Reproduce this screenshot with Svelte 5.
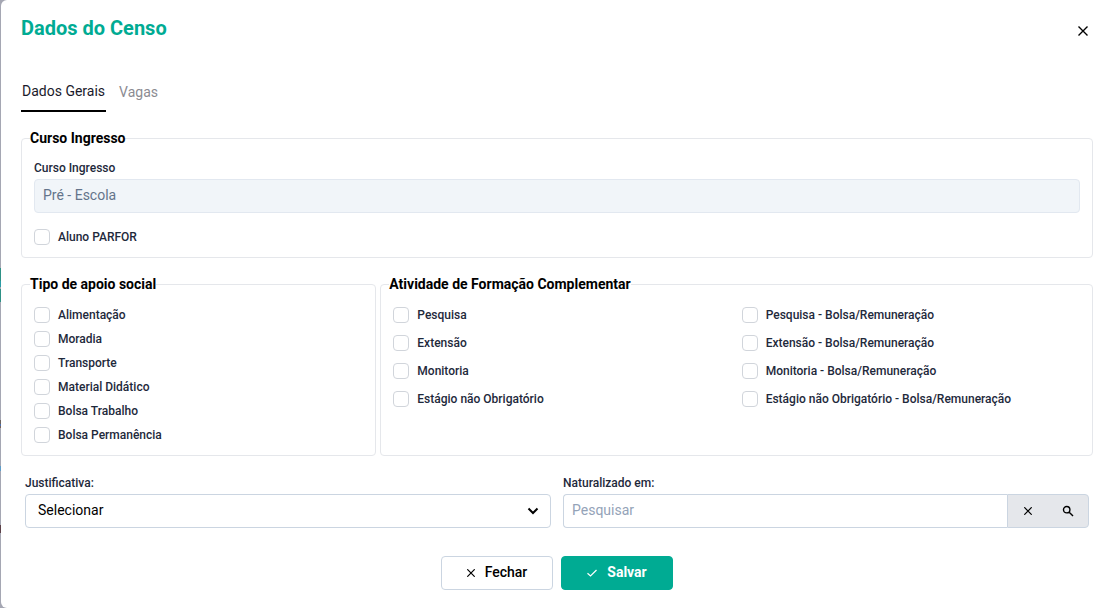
<script lang="ts">
	const supports = [
		'Alimentação',
		'Moradia',
		'Transporte',
		'Material Didático',
		'Bolsa Trabalho',
		'Bolsa Permanência'
	];
	const activities = ['Pesquisa', 'Extensão', 'Monitoria', 'Estágio não Obrigatório'];

	let tab = 'Dados Gerais';
	let parfor = false;
	let support: string[] = [];
	let activity: string[] = [];
	let search = '';
</script>

<div class="backdrop">
	<div class="dialog" role="dialog" aria-labelledby="dialog-title">
		<header>
			<h1 id="dialog-title">Dados do Censo</h1>
			<button class="close" type="button" aria-label="Fechar janela">
				<svg width="10" height="10" viewBox="0 0 10 10"><path d="M0.5 0.5L9.5 9.5M9.5 0.5L0.5 9.5" /></svg>
			</button>
		</header>

		<div class="tabs" role="tablist">
			{#each ['Dados Gerais', 'Vagas'] as name}
				<button
					type="button"
					role="tab"
					class="tab"
					class:tab--active={tab === name}
					aria-selected={tab === name}
					on:click={() => (tab = name)}>{name}</button>
			{/each}
		</div>

		<form on:submit|preventDefault>
			<fieldset>
				<legend>Curso Ingresso</legend>
				<div class="field">
					<label for="course">Curso Ingresso</label>
					<input id="course" class="control" type="text" value="Pré - Escola" disabled />
				</div>
				<label class="check check--parfor">
					<input type="checkbox" bind:checked={parfor} />
					Aluno PARFOR
				</label>
			</fieldset>

			<div class="groups">
				<fieldset class="support">
					<legend>Tipo de apoio social</legend>
					<div class="check-list">
						{#each supports as item}
							<label class="check">
								<input type="checkbox" value={item} bind:group={support} />
								{item}
							</label>
						{/each}
					</div>
				</fieldset>

				<fieldset class="activity">
					<legend>Atividade de Formação Complementar</legend>
					<div class="check-grid">
						{#each activities as item}
							<label class="check">
								<input type="checkbox" value={item} bind:group={activity} />
								{item}
							</label>
							<label class="check">
								<input type="checkbox" value="{item} - Bolsa" bind:group={activity} />
								{item} - Bolsa/Remuneração
							</label>
						{/each}
					</div>
				</fieldset>
			</div>

			<div class="row">
				<div class="field">
					<label for="reason">Justificativa:</label>
					<div class="select">
						<select id="reason" class="control">
							<option>Selecionar</option>
						</select>
						<svg class="chevron" width="12" height="8" viewBox="0 0 12 8"><path d="M1.5 1.5L6 6L10.5 1.5" /></svg>
					</div>
				</div>
				<div class="field">
					<label for="country">Naturalizado em:</label>
					<div class="search">
						<input id="country" class="control" type="text" placeholder="Pesquisar" bind:value={search} />
						<div class="search-actions">
							<button type="button" aria-label="Limpar" on:click={() => (search = '')}>
								<svg width="8" height="8" viewBox="0 0 8 8"><path d="M0.3 0.3L7.7 7.7M7.7 0.3L0.3 7.7" /></svg>
							</button>
							<button type="button" aria-label="Pesquisar">
								<svg class="lens" width="12" height="12" viewBox="0 0 12 12"><circle cx="4.7" cy="4.7" r="3.2" /><path d="M7.2 7.2L11 11" /></svg>
							</button>
						</div>
					</div>
				</div>
			</div>

			<footer>
				<button class="btn" type="button">
					<svg width="8" height="8" viewBox="0 0 8 8"><path d="M0.3 0.3L7.7 7.7M7.7 0.3L0.3 7.7" /></svg>
					Fechar
				</button>
				<button class="btn btn--primary" type="submit">
					<svg width="10" height="8" viewBox="0 0 10 8"><path d="M0.5 4.2L3.5 7L9.5 1" /></svg>
					Salvar
				</button>
			</footer>
		</form>
	</div>
</div>

<style>
:global(body) {
	background: #a5a7b3;
}
.backdrop {
	padding-left: 1px;
	/* the dimmed page behind shows along the edge */
	background: linear-gradient(
		#a5a7b3 268px,
		#2e9186 268px 281px,
		#2b9ca6 281px 287px,
		#a5a7b3 287px 289px,
		#2e9186 289px 302px,
		#a5a7b3 302px 420px,
		#6b625f 420px 424px,
		#4c6fae 424px 426px,
		#75625a 426px 428px,
		#a5a7b3 428px 466px,
		#5d9cc8 466px 471px,
		#a5a7b3 471px 525px,
		#5c4148 525px 533px,
		#a5a7b3 533px
	);
	font-family: Roboto, "Liberation Sans", sans-serif;
	font-size: 14px;
	line-height: 20px;
	color: #000;
}
.dialog {
	box-sizing: border-box;
	min-height: 100vh;
	padding: 16px 15px 18px 20px;
	border-radius: 6px 0 0 6px;
	background: #fff;
}
button,
input,
select {
	font: inherit;
	color: inherit;
	box-sizing: border-box;
	margin: 0;
}
button {
	padding: 0;
	border: 0;
	background: none;
	cursor: pointer;
}
svg {
	fill: none;
	stroke: currentColor;
	stroke-width: 1.2;
}
header {
	display: flex;
	justify-content: space-between;
	align-items: flex-start;
}
h1 {
	margin: 0;
	font-size: 20px;
	line-height: 24px;
	font-weight: 700;
	color: #00ab93;
}
.close {
	display: flex;
	align-items: center;
	justify-content: center;
	width: 20px;
	height: 30px;
}
.close svg,
.lens {
	stroke-width: 1.4;
}
.tabs {
	display: flex;
	gap: 12px;
	margin-top: 34px;
}
.tab {
	height: 32px;
	padding: 2px 1px 10px;
	color: #8b8b92;
}
.tab--active {
	padding: 1px 1px 9px;
	border-bottom: 2px solid #000;
	color: #1a1a2b;
}
fieldset {
	box-sizing: border-box;
	min-width: 0;
	margin: 0;
	padding: 12px;
	border: 1px solid #e5e7eb;
	border-radius: 4px;
}
form {
	margin-top: 16px;
}
legend {
	margin-left: -4px;
	padding: 0;
	font-weight: 700;
}
.field {
	display: flex;
	flex-direction: column;
	gap: 3px;
	flex: 1;
	min-width: 0;
}
label {
	font-size: 12px;
	line-height: 16px;
	font-weight: 500;
	color: #1e293b;
}
.control {
	width: 100%;
	height: 34px;
	padding: 0 8px 2px;
	border: 1px solid #cbd5e1;
	border-radius: 4px;
	background: #fff;
}
.control:disabled {
	border-color: #e2e8f0;
	background: #f1f5f9;
	color: #64748b;
}
.control::placeholder {
	color: #94a3b8;
	opacity: 1;
}
.check {
	display: flex;
	align-items: center;
	gap: 8px;
}
.check input {
	appearance: none;
	width: 16px;
	height: 16px;
	border: 1px solid #d1d5db;
	border-radius: 4px;
	background: #fff;
}
.check input:checked {
	border-color: #00ab93;
	background: #00ab93;
}
.check--parfor {
	margin-top: 16px;
}
.groups {
	display: flex;
	gap: 4px;
	margin-top: 16px;
}
.groups fieldset {
	padding-top: 13px;
}
.support {
	flex: 0 0 calc(100% / 3 - 2px);
}
.activity {
	flex: 1;
}
.check-list {
	display: grid;
	gap: 8px;
}
.check-grid {
	display: grid;
	grid-template-columns: 1fr 1fr;
	gap: 12px 10px;
}
.row {
	display: flex;
	gap: 12px;
	margin-top: 19px;
	padding: 0 4px;
}
.select {
	display: grid;
	align-items: center;
}
.select > * {
	grid-area: 1 / 1;
}
.select select {
	appearance: none;
	padding: 0 32px 2px 12px;
}
.chevron {
	justify-self: end;
	margin-right: 12px;
	stroke-width: 2;
	pointer-events: none;
}
.search {
	display: flex;
}
.search .control {
	flex: 1;
	min-width: 0;
	border-right: 0;
	border-radius: 4px 0 0 4px;
}
.search-actions {
	display: flex;
	border: 1px solid #cbd5e1;
	border-radius: 0 4px 4px 0;
	background: #e5e7eb;
}
.search-actions button {
	display: flex;
	align-items: center;
	justify-content: center;
	width: 40px;
}
footer {
	display: flex;
	justify-content: center;
	gap: 8px;
	margin-top: 28px;
}
.btn {
	display: flex;
	align-items: center;
	justify-content: center;
	gap: 10px;
	width: 112px;
	height: 34px;
	border: 1px solid #cbd5e1;
	border-radius: 4px;
	font-weight: 500;
}
.btn svg {
	margin-top: 2px;
}
.btn {
	padding-bottom: 2px;
}
.btn--primary {
	border-color: #00ab93;
	background: #00ab93;
	color: #fff;
	font-weight: 700;
}
</style>
